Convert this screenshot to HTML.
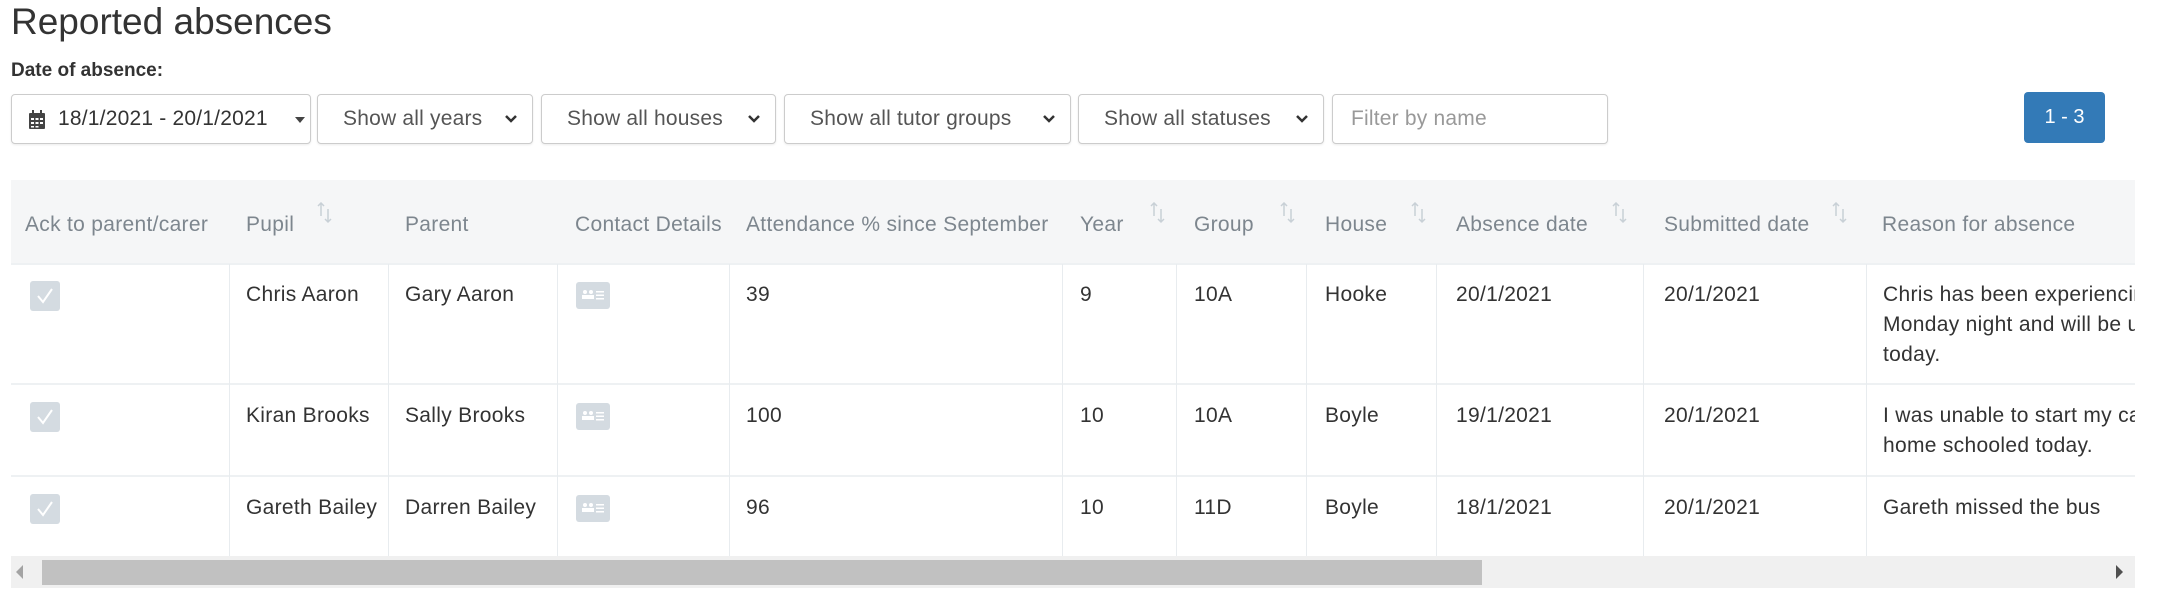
<!DOCTYPE html>
<html><head><meta charset="utf-8"><style>
*{box-sizing:border-box;margin:0;padding:0}
body{width:2160px;height:598px;background:#fff;font-family:"Liberation Sans",sans-serif;color:#333;position:relative;overflow:hidden}
.a{position:absolute;white-space:nowrap}
.sel{position:absolute;top:94px;height:50px;border:1px solid #ccc;border-radius:4px;background:#fff;font-size:21px;letter-spacing:0.2px;color:#555;line-height:48px;padding-left:25px;box-shadow:0 1px 2px rgba(0,0,0,.08)}
.sel svg{position:absolute;right:14px;top:19px}
.th{position:absolute;top:213px;font-size:21px;letter-spacing:0.3px;color:#7d868e}
.sort{position:absolute;top:202px}
.td{position:absolute;font-size:21px;letter-spacing:0.3px;color:#333;line-height:30px}
.vl{position:absolute;width:1px;background:#e8ecef;top:264px;height:292px}
.hl{position:absolute;height:2px;background:#eef1f3;left:11px;width:2124px}
.cb{position:absolute;left:30px;width:30px;height:30px;border-radius:3px;background:#d4dbe1}
.ci{position:absolute;left:576px;width:34px;height:27px;border-radius:3px;background:#d4dbe1}
</style></head><body>
<div class="a" style="left:11px;top:1px;font-size:37px;color:#333">Reported absences</div>
<div class="a" style="left:11px;top:60px;font-size:19px;font-weight:bold;color:#333">Date of absence:</div>

<div class="sel" style="left:11px;width:300px;padding-left:46px;color:#333">
<svg style="position:absolute;left:17px;top:15px" width="16" height="19" viewBox="0 0 16 19"><rect x="0" y="3" width="16" height="16" rx="1" fill="#444"/><rect x="3" y="0" width="2" height="5" fill="#444"/><rect x="11" y="0" width="2" height="5" fill="#444"/><g fill="#fff"><rect x="2" y="8" width="3" height="2"/><rect x="6.5" y="8" width="3" height="2"/><rect x="11" y="8" width="3" height="2"/><rect x="2" y="12" width="3" height="2"/><rect x="6.5" y="12" width="3" height="2"/><rect x="11" y="12" width="3" height="2"/><rect x="2" y="16" width="3" height="1.5"/><rect x="6.5" y="16" width="3" height="1.5"/></g></svg>
18/1/2021 - 20/1/2021
<svg style="position:absolute;left:283px;top:22px" width="10" height="6"><path d="M0 0H10L5 6Z" fill="#444"/></svg></div>
<div class="sel" style="left:317px;width:216px">Show all years<svg width="14" height="10"><path d="M2 2L7 7L12 2" stroke="#333" stroke-width="2.5" fill="none"/></svg></div>
<div class="sel" style="left:541px;width:235px">Show all houses<svg width="14" height="10"><path d="M2 2L7 7L12 2" stroke="#333" stroke-width="2.5" fill="none"/></svg></div>
<div class="sel" style="left:784px;width:287px">Show all tutor groups<svg width="14" height="10"><path d="M2 2L7 7L12 2" stroke="#333" stroke-width="2.5" fill="none"/></svg></div>
<div class="sel" style="left:1078px;width:246px">Show all statuses<svg width="14" height="10"><path d="M2 2L7 7L12 2" stroke="#333" stroke-width="2.5" fill="none"/></svg></div>
<div class="sel" style="left:1332px;width:276px;color:#999;padding-left:18px">Filter by name</div>
<div class="a" style="left:2024px;top:92px;width:81px;height:51px;background:#337ab7;border-radius:4px;color:#fff;font-size:20px;text-align:center;line-height:51px">1 - 3</div>

<div class="a" style="left:11px;top:180px;width:2124px;height:84px;background:#f5f6f7"></div>
<div class="th" style="left:25px">Ack to parent/carer</div>
<div class="th" style="left:246px">Pupil</div>
<div class="th" style="left:405px">Parent</div>
<div class="th" style="left:575px">Contact Details</div>
<div class="th" style="left:746px">Attendance % since September</div>
<div class="th" style="left:1080px">Year</div>
<div class="th" style="left:1194px">Group</div>
<div class="th" style="left:1325px">House</div>
<div class="th" style="left:1456px">Absence date</div>
<div class="th" style="left:1664px">Submitted date</div>
<div class="th" style="left:1882px">Reason for absence</div>
<svg width="0" height="0" style="position:absolute"><defs><g id="s"><path d="M4 1V14M1 4L4 1L7 4" stroke="#c8d0d6" stroke-width="1.5" fill="none"/><path d="M11 7V20M8 17L11 20L14 17" stroke="#c8d0d6" stroke-width="1.5" fill="none"/></g></defs></svg>
<svg class="sort" style="left:317px" width="16" height="22"><use href="#s"/></svg>
<svg class="sort" style="left:1150px" width="16" height="22"><use href="#s"/></svg>
<svg class="sort" style="left:1280px" width="16" height="22"><use href="#s"/></svg>
<svg class="sort" style="left:1411px" width="16" height="22"><use href="#s"/></svg>
<svg class="sort" style="left:1612px" width="16" height="22"><use href="#s"/></svg>
<svg class="sort" style="left:1832px" width="16" height="22"><use href="#s"/></svg>

<div class="hl" style="top:263px"></div>
<div class="hl" style="top:383px"></div>
<div class="hl" style="top:475px"></div>
<div class="vl" style="left:229px"></div><div class="vl" style="left:388px"></div><div class="vl" style="left:557px"></div><div class="vl" style="left:729px"></div><div class="vl" style="left:1062px"></div><div class="vl" style="left:1176px"></div><div class="vl" style="left:1306px"></div><div class="vl" style="left:1436px"></div><div class="vl" style="left:1643px"></div><div class="vl" style="left:1866px"></div>

<!-- row 1 -->
<div class="cb" style="top:281px"><svg width="30" height="30"><path d="M8 15L13 21L22 8" stroke="#fff" stroke-width="2" fill="none"/></svg></div>
<div class="ci" style="top:282px"><svg width="34" height="27"><g fill="#fff"><circle cx="9" cy="10" r="2"/><circle cx="15" cy="10" r="2"/><rect x="6" y="13" width="6" height="4"/><rect x="12" y="13" width="6" height="4"/><rect x="20" y="9" width="8" height="1.5"/><rect x="20" y="12.5" width="8" height="1.5"/><rect x="20" y="16" width="8" height="1.5"/></g></svg></div>
<div class="td" style="left:246px;top:280px">Chris Aaron</div>
<div class="td" style="left:405px;top:280px">Gary Aaron</div>
<div class="td" style="left:746px;top:280px">39</div>
<div class="td" style="left:1080px;top:280px">9</div>
<div class="td" style="left:1194px;top:280px">10A</div>
<div class="td" style="left:1325px;top:280px">Hooke</div>
<div class="td" style="left:1456px;top:280px">20/1/2021</div>
<div class="td" style="left:1664px;top:280px">20/1/2021</div>
<div class="td" style="left:1883px;top:280px;width:252px;overflow:hidden;white-space:nowrap">Chris has been experiencing<br>Monday night and will be unwell<br>today.</div>
<!-- row 2 -->
<div class="cb" style="top:402px"><svg width="30" height="30"><path d="M8 15L13 21L22 8" stroke="#fff" stroke-width="2" fill="none"/></svg></div>
<div class="ci" style="top:403px"><svg width="34" height="27"><g fill="#fff"><circle cx="9" cy="10" r="2"/><circle cx="15" cy="10" r="2"/><rect x="6" y="13" width="6" height="4"/><rect x="12" y="13" width="6" height="4"/><rect x="20" y="9" width="8" height="1.5"/><rect x="20" y="12.5" width="8" height="1.5"/><rect x="20" y="16" width="8" height="1.5"/></g></svg></div>
<div class="td" style="left:246px;top:401px">Kiran Brooks</div>
<div class="td" style="left:405px;top:401px">Sally Brooks</div>
<div class="td" style="left:746px;top:401px">100</div>
<div class="td" style="left:1080px;top:401px">10</div>
<div class="td" style="left:1194px;top:401px">10A</div>
<div class="td" style="left:1325px;top:401px">Boyle</div>
<div class="td" style="left:1456px;top:401px">19/1/2021</div>
<div class="td" style="left:1664px;top:401px">20/1/2021</div>
<div class="td" style="left:1883px;top:401px;width:252px;overflow:hidden;white-space:nowrap">I was unable to start my car<br>home schooled today.</div>
<!-- row 3 -->
<div class="cb" style="top:494px"><svg width="30" height="30"><path d="M8 15L13 21L22 8" stroke="#fff" stroke-width="2" fill="none"/></svg></div>
<div class="ci" style="top:495px"><svg width="34" height="27"><g fill="#fff"><circle cx="9" cy="10" r="2"/><circle cx="15" cy="10" r="2"/><rect x="6" y="13" width="6" height="4"/><rect x="12" y="13" width="6" height="4"/><rect x="20" y="9" width="8" height="1.5"/><rect x="20" y="12.5" width="8" height="1.5"/><rect x="20" y="16" width="8" height="1.5"/></g></svg></div>
<div class="td" style="left:246px;top:493px">Gareth Bailey</div>
<div class="td" style="left:405px;top:493px">Darren Bailey</div>
<div class="td" style="left:746px;top:493px">96</div>
<div class="td" style="left:1080px;top:493px">10</div>
<div class="td" style="left:1194px;top:493px">11D</div>
<div class="td" style="left:1325px;top:493px">Boyle</div>
<div class="td" style="left:1456px;top:493px">18/1/2021</div>
<div class="td" style="left:1664px;top:493px">20/1/2021</div>
<div class="td" style="left:1883px;top:493px">Gareth missed the bus</div>

<!-- scrollbar -->
<div class="a" style="left:11px;top:556px;width:2124px;height:32px;background:#f0f0f0"></div>
<div class="a" style="left:42px;top:560px;width:1440px;height:25px;background:#c1c1c1"></div>
<svg class="a" style="left:16px;top:565px" width="8" height="14"><path d="M7 0V14L0 7Z" fill="#a3a3a3"/></svg>
<svg class="a" style="left:2116px;top:565px" width="8" height="14"><path d="M0 0V14L7 7Z" fill="#505050"/></svg>
</body></html>
